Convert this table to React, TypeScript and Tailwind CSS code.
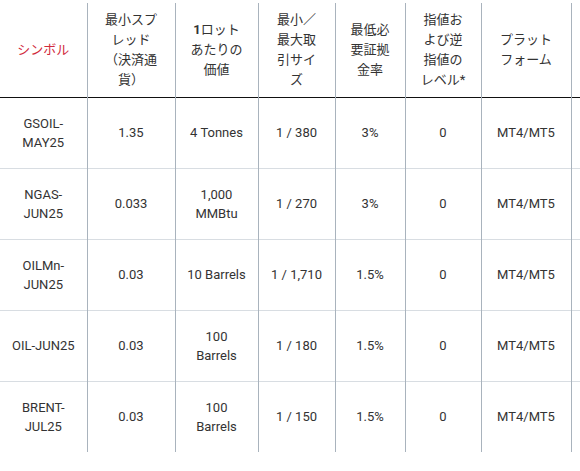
const headers: React.ReactNode[] = [
  <span className="text-[#d12a3c]">シンボル</span>,
  <>最小スプ<br />レッド<br />（決済通<br />貨）</>,
  <><span className="font-bold">1</span>ロット<br />あたりの<br />価値</>,
  <>最小／<br />最大取<br />引サイ<br />ズ</>,
  <>最低必<br />要証拠<br />金率</>,
  <>指値お<br />よび逆<br />指値の<br />レベル*</>,
  <>プラット<br />フォーム</>,
  <></>,
];

const widths = ['w-[87px]', 'w-[88px]', 'w-[83px]', 'w-[77px]', 'w-[70px]', 'w-[76px]', 'w-[90px]', 'w-[90px]'];

const rows: string[][][] = [
  [['GSOIL-', 'MAY25'], ['1.35'], ['4 Tonnes'], ['1 / 380'], ['3%'], ['0'], ['MT4/MT5'], []],
  [['NGAS-', 'JUN25'], ['0.033'], ['1,000', 'MMBtu'], ['1 / 270'], ['3%'], ['0'], ['MT4/MT5'], []],
  [['OILMn-', 'JUN25'], ['0.03'], ['10 Barrels'], ['1 / 1,710'], ['1.5%'], ['0'], ['MT4/MT5'], []],
  [['OIL-JUN25'], ['0.03'], ['100', 'Barrels'], ['1 / 180'], ['1.5%'], ['0'], ['MT4/MT5'], []],
  [['BRENT-', 'JUL25'], ['0.03'], ['100', 'Barrels'], ['1 / 150'], ['1.5%'], ['0'], ['MT4/MT5'], []],
];

export default function App() {
  return (
    <div className="w-[580px] h-[471px] overflow-hidden bg-white pt-[3px] text-[13px] leading-[20px] text-[#333333] [font-family:Roboto,'Noto_Sans_CJK_JP',sans-serif]">
      <table className="border-collapse table-fixed w-[661px] text-center">
        <thead>
          <tr className="h-[94px] border-b border-[#111111]">
            {headers.map((h, i) => (
              <th key={i} className={`${widths[i]} font-normal align-middle px-0 border-r border-[#a9b3bd]`}>
                {h}
              </th>
            ))}
          </tr>
        </thead>
        <tbody>
          {rows.map((r, ri) => (
            <tr key={ri} className={`h-[71px] ${ri < rows.length - 1 ? 'border-b border-[#d8dde2]' : ''}`}>
              {r.map((c, ci) => (
                <td key={ci} className="align-middle leading-[19px] border-r border-[#a9b3bd]">
                  {c.map((line, li) => (
                    <div key={li}>{line}</div>
                  ))}
                </td>
              ))}
            </tr>
          ))}
        </tbody>
      </table>
    </div>
  );
}
